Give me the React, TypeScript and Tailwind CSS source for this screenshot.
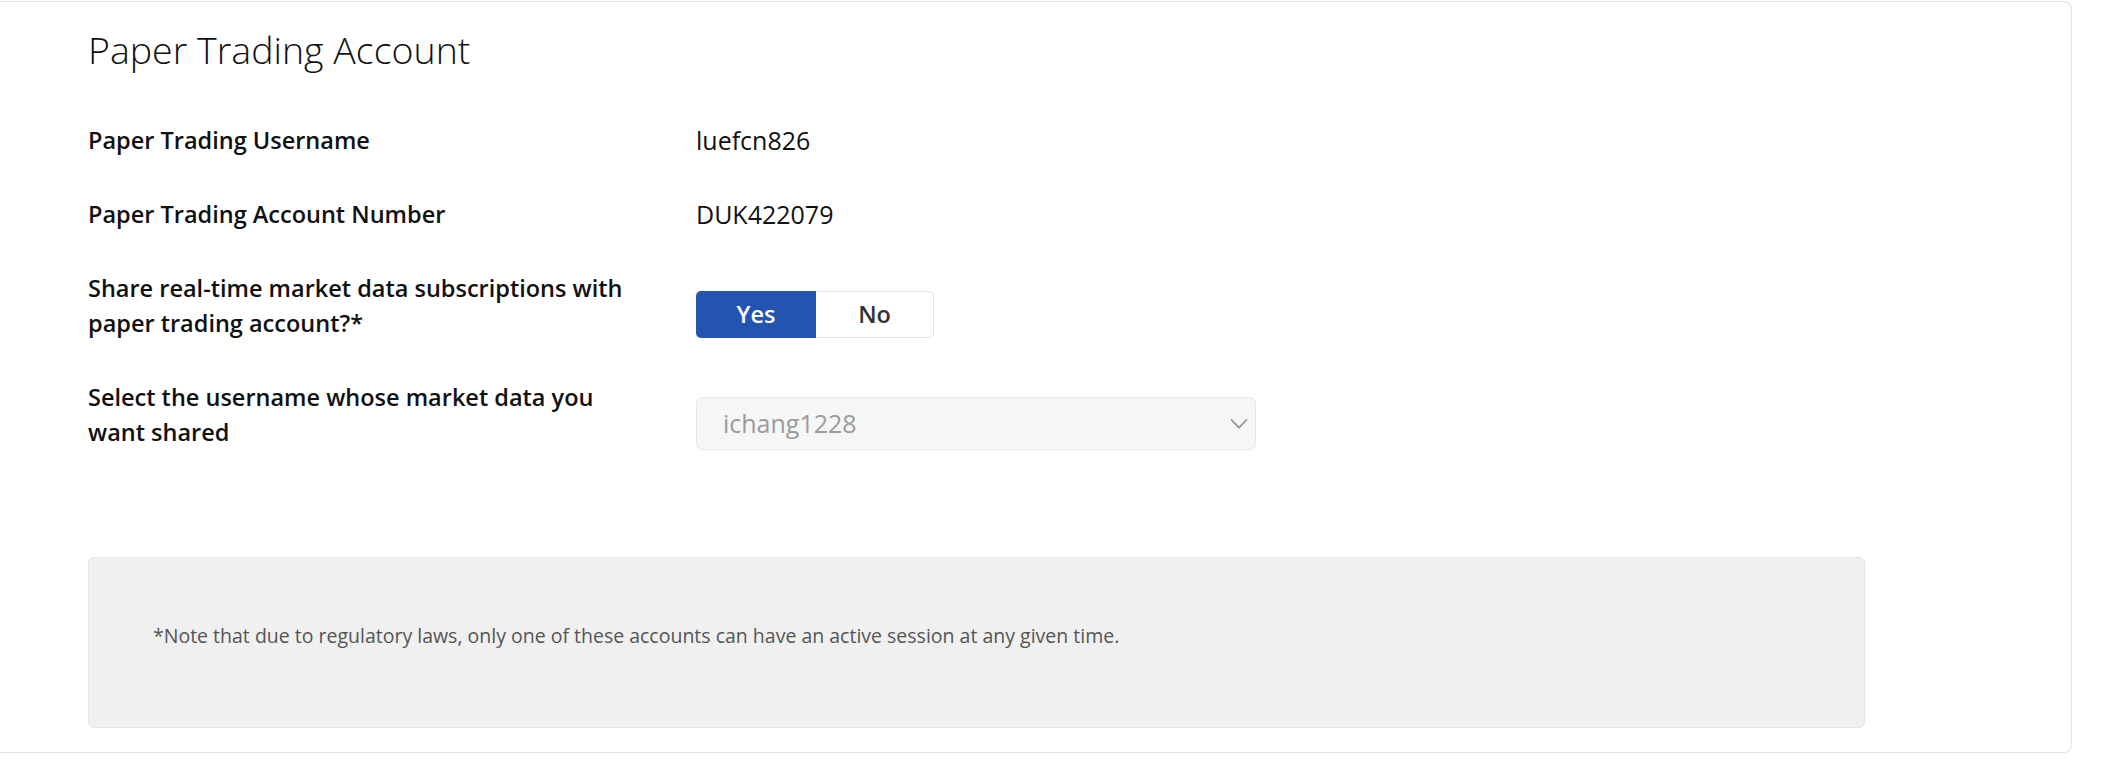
const fontStack = { fontFamily: '"Open Sans", "Liberation Sans", sans-serif' };

const Row = ({ label, children, controlClass = "" }: { label: string; children: React.ReactNode; controlClass?: string }) => {
  return (
    <div className="flex items-start">
      <div className="w-[608px] shrink-0">
        <div className="max-w-[552px] text-[23.5px] font-semibold leading-[35px] text-[#111]">{label}</div>
      </div>
      <div className={controlClass}>{children}</div>
    </div>
  );
};

const App = () => {
  return (
    <div className="w-[2110px] h-[770px] bg-white pt-px pr-[38px] pb-[17px]" style={fontStack}>
      <div className="h-full border-y border-r border-[#e3e3e3] rounded-r-lg pl-[88px] pr-[206px] pt-[26px]">
        <h1 className="text-[37.5px] font-light leading-[44px] text-[#111]">Paper Trading Account</h1>

        <div className="mt-[51px] flex flex-col gap-[39px]">
          <Row label="Paper Trading Username">
            <span className="text-[25px] leading-[35px] text-[#111]">luefcn826</span>
          </Row>
          <Row label="Paper Trading Account Number">
            <span className="text-[25px] leading-[35px] text-[#111]">DUK422079</span>
          </Row>
          <Row label="Share real-time market data subscriptions with paper trading account?*" controlClass="mt-[20px]">
            <div className="flex">
              <button className="w-[120px] h-[47px] rounded-l-[5px] bg-[#2454b1] text-white text-[23.5px] font-semibold">
                Yes
              </button>
              <button className="w-[118px] h-[47px] rounded-r-[5px] border border-l-0 border-[#e2e2e2] bg-white text-[#333] text-[23.5px] font-semibold">
                No
              </button>
            </div>
          </Row>
          <Row label="Select the username whose market data you want shared" controlClass="mt-[17px]">
            <div className="w-[560px] h-[53px] flex items-center justify-between bg-[#f5f6f6] border border-[#e6e8e8] rounded-[6px] pl-[26px] pr-[7px]">
              <span className="text-[25px] text-[#9b9b9b]">ichang1228</span>
              <svg width="18" height="11" viewBox="0 0 18 11" fill="none">
                <path d="M1 1.5 L9 9.5 L17 1.5" stroke="#8c8c8c" strokeWidth="1.6" />
              </svg>
            </div>
          </Row>
        </div>

        <div className="mt-[107px] h-[171px] bg-[#f0f0f0] border border-[#e4e4e4] rounded-[6px] pl-[64px] pt-[65px]">
          <p className="text-[19.5px] leading-[26px] text-[#555]">
            *Note that due to regulatory laws, only one of these accounts can have an active session at any given time.
          </p>
        </div>
      </div>
    </div>
  );
};

export default App;
